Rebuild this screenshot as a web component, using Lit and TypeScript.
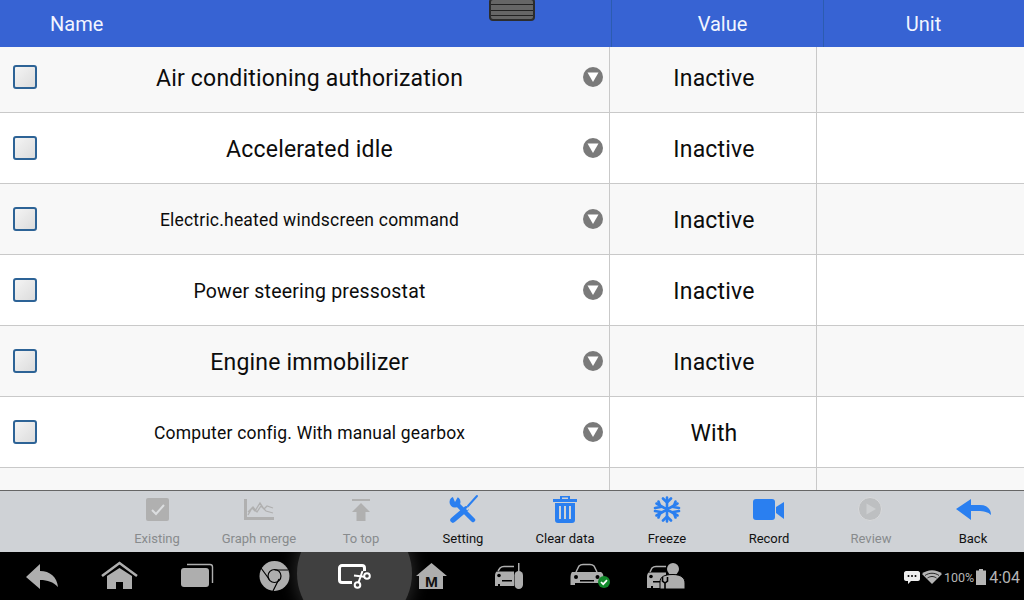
import { LitElement, html, css, svg } from "lit";
import { customElement } from "lit/decorators.js";

const rows: [string, string, string][] = [
  ["Air conditioning authorization", "Inactive", "lg"],
  ["Accelerated idle", "Inactive", "lg"],
  ["Electric.heated windscreen command", "Inactive", "sm"],
  ["Power steering pressostat", "Inactive", "md"],
  ["Engine immobilizer", "Inactive", "lg"],
  ["Computer config. With manual gearbox", "With", "sm"],
];

const B = "#2a7ff0";
const G = "#b0b0b0";
const N = "#aeaeae";
const BAR = "#cfd2d6";

const tools: [string, boolean, unknown][] = [
  ["Existing", false, svg`<rect x="6" y="3" width="23" height="23" rx="2" fill="${G}"/><path d="M12 15l4 4 8-9" fill="none" stroke="#dcdee0" stroke-width="2"/>`],
  ["Graph merge", false, svg`<path d="M2 4h3v18h27v3H2z" fill="${G}"/><path d="M6 20l4-7 3 3 5-8 4 6 3-3 6 2M6 17l5-5 4 5 4-6 5 5 7 2" fill="none" stroke="${G}" stroke-width="1.300"/>`],
  ["To top", false, svg`<path d="M8 4h18v2H8zM17 8l9 9h-4.500v9h-9v-9H8z" fill="${G}"/>`],
  ["Setting", true, svg`<path d="M31 1L22 11" stroke="${B}" stroke-width="2" stroke-linecap="round"/><path d="M20 14L7 25" stroke="${B}" stroke-width="5.500" stroke-linecap="round"/><path d="M10 8L27 25" stroke="${B}" stroke-width="4.500" stroke-linecap="round"/><circle cx="9" cy="7" r="5.500" fill="${B}"/><path d="M9 7L6 0h7z" fill="${BAR}"/><path d="M22 12l1.500 1.500-2 2-1.500-1.500z" fill="${BAR}"/>`],
  ["Clear data", true, svg`<g transform="translate(1,-1)"><path d="M11 5V2h10v3h7v3H4V5zM13 3.500v1.500h6V3.500z" fill="${B}" fill-rule="evenodd"/><path d="M6 9h20v17c0 2-1 3-3 3H9c-2 0-3-1-3-3zM10 12v13h2V12zM15 12v13h2V12zM20 12v13h2V12z" fill="${B}" fill-rule="evenodd"/></g>`],
  ["Freeze", true, svg`<g transform="translate(1,-.5)" stroke="${B}" stroke-width="2.600" fill="none" stroke-linecap="round"><path d="M16 3v24M5.500 9l21 12M26.500 9l-21 12"/><path d="M12 4l4 4 4-4M12 26l4-4 4 4M4 13.500l5.500-1L7.500 7M28 16.500l-5.500 1 2 5.500M7.500 23l2-5.500L4 16.500M24.500 7l-2 5.500 5.500 1"/></g>`],
  ["Record", true, svg`<rect x="1" y="4" width="22" height="21" rx="3" fill="${B}"/><path d="M24 12l8-5v17l-8-6z" fill="${B}"/>`],
  ["Review", false, svg`<circle cx="16" cy="14" r="11.500" fill="#bdbfc1" stroke="#d9dadc" stroke-width="1"/><path d="M12.500 8.500l9.500 5.500-9.500 5.500z" fill="#cdcfd1"/>`],
  ["Back", true, svg`<path d="M0 14L15 4v6h9c7 0 11 4 11 10-3-3-7-4-13-4h-7v9z" fill="${B}"/>`],
];

const navIcons: unknown[] = [
  svg`<path d="M4 17L18 4v7c10 0 17 6 18 16-5-5-10-7-18-7v9z" fill="${N}"/>`,
  svg`<path d="M2 16L19.500 3 37 16" fill="none" stroke="${N}" stroke-width="2.600"/><path d="M7 16L19.500 8 32 16v13h-9v-7h-7v7H7z" fill="${N}"/>`,
  svg`<rect x="3" y="8" width="28" height="19" rx="3" fill="${N}"/><path d="M9 4.500h23c2 0 2.500 1 2.500 2.500v16" fill="none" stroke="${N}" stroke-width="1.400"/>`,
  svg`<circle cx="18.500" cy="16" r="15" fill="${N}"/><circle cx="18.500" cy="16" r="6.500" fill="none" stroke="#000" stroke-width="1.200"/><path d="M18.500 10H32M13 19L5 8M17 31l6-12" stroke="#000" stroke-width="1.200" fill="none"/>`,
  svg`<path d="M18 22.500H8a2.500 2.500 0 0 1-2.500-2.500V8A2.500 2.500 0 0 1 8 5.500h20A2.500 2.500 0 0 1 30.500 8v3" fill="none" stroke="#fff" stroke-width="3"/><circle cx="33" cy="16" r="2.800" fill="none" stroke="#fff" stroke-width="2"/><circle cx="23.500" cy="25" r="2.800" fill="none" stroke="#fff" stroke-width="2"/><path d="M24.500 22.500L28.500 11M30.500 16.800L20 15.500" stroke="#fff" stroke-width="2" fill="none"/>`,
  svg`<path d="M19.500 3L35 16h-4v13H7V16H4z" fill="${N}"/><text x="19.500" y="27" text-anchor="middle" font-family="Liberation Sans, sans-serif" font-weight="700" font-size="15.500" fill="#111">M</text>`,
  svg`<path d="M8 11l2-3c1-1 2-1.500 4-1.500h10" fill="none" stroke="${N}" stroke-width="1.500"/><path d="M7 11.500H24V26H10v-2H8v2H5V16c0-3 1-4.500 2-4.500z" fill="${N}"/><circle cx="9" cy="15.500" r="1.800" fill="#000"/><rect x="12" y="20" width="10" height="1.500" fill="#000"/><rect x="24.500" y="11" width="8.500" height="18" rx="4.200" fill="${N}"/><rect x="28" y="3" width="1.500" height="9" fill="${N}"/>`,
  svg`<path d="M8 12l3-6c1-1 2-1.500 4-1.500h7c2 0 3 .5 4 1.500l3 6" fill="none" stroke="${N}" stroke-width="1.500"/><path d="M4 12H33c2 1 2.500 3 2.500 6v7H31v-2H7v2H2.500v-7c0-3 .5-5 1.500-6z" fill="${N}"/><circle cx="8" cy="17" r="2" fill="#000"/><circle cx="29.500" cy="17" r="2" fill="#000"/><rect x="12" y="20" width="14" height="1.500" fill="#000"/><circle cx="36" cy="22" r="6" fill="#128a2c"/><path d="M33 22l2.200 2.200 3.800-4" fill="none" stroke="#fff" stroke-width="1.700"/>`,
  svg`<path d="M4 12l2-4c1-1 2-1.500 4-1.500h10" fill="none" stroke="${N}" stroke-width="1.500"/><path d="M3 12.500H20V28H7v-2H5v2H1V17c0-3 1-4.500 2-4.500z" fill="${N}"/><circle cx="5" cy="16.500" r="1.800" fill="#000"/><rect x="7" y="21" width="8" height="1.500" fill="#000"/><circle cx="27" cy="9" r="6" fill="${N}"/><path d="M14 29v-7c0-5 4-7.500 13-7.500 8 0 12 3.500 12 8.500v6z" fill="${N}" stroke="#000" stroke-width="1"/><path d="M16.500 17v4l2.500 2 2.500-2v-4M19 23v7" fill="none" stroke="#000" stroke-width="1.600"/>`,
];

@customElement("app-root")
export class AppRoot extends LitElement {
  static styles = css`
    :host { display: block; width: 1024px; height: 600px; overflow: hidden; font-family: Roboto, sans-serif; position: relative; background: #fff; }
    .page { display: flex; flex-direction: column; height: 600px; }
    .head { height: 47px; background: #3763d3; color: #f2f5ff; display: grid; grid-template-columns: 611px 212px 201px; font-size: 20px; flex: none; position: relative; z-index: 1; }
    .head div { display: flex; align-items: center; justify-content: center; padding-top: 1px; padding-right: 1px; border-left: 1px solid #2c5cb0; box-sizing: border-box; }
    .head div:first-child { justify-content: flex-start; padding-left: 50px; border-left: 0; }
    .head div:nth-child(2) { padding-left: 11px; }
    .handle { position: absolute; left: 489px; top: -2px; width: 46px; height: 23px; box-sizing: border-box; background: repeating-linear-gradient(#666 0 4.500px, #222 4.500px 5.500px); border: 2px solid #2c2c2c; border-radius: 4px; z-index: 2; }
    .rows { flex: none; height: 443px; overflow: hidden; }
    .list { margin-top: -5px; }
    .row { display: grid; grid-template-columns: 610px 207px 207px; height: 71px; box-sizing: border-box; border-bottom: 1px solid #c9c9c9; background: #fff; color: #0c0c0c; }
    .row:nth-child(odd) { background: #f8f8f8; }
    .cell { display: flex; align-items: center; justify-content: center; border-right: 1px solid #c9c9c9; position: relative; min-width: 0; }
    .cell:last-child { border-right: 0; }
    .check { position: absolute; left: 13px; top: 50%; margin-top: -12px; width: 24px; height: 24px; box-sizing: border-box; border: 2px solid #2d6396; border-radius: 3px; background: linear-gradient(135deg, #f4f4f4, #dcdcdc); }
    .arrow { position: absolute; left: 583px; top: 50%; margin-top: -10px; width: 20px; height: 20px; border-radius: 50%; background: #7a7a7a; display: flex; align-items: center; justify-content: center; }
    .name { transform: translate(5px, 1px); white-space: nowrap; letter-spacing: .2px; }
    .lg { font-size: 23px; }
    .md { font-size: 19.500px; }
    .sm { font-size: 17.500px; }
    .val { font-size: 23px; letter-spacing: .2px; transform: translate(1px, 1px); }
    .bar { flex: none; height: 62px; background: #cfd2d6; border-top: 1px solid #666; box-sizing: border-box; display: flex; padding-left: 106px; }
    .tool { width: 102px; display: flex; flex-direction: column; align-items: center; font-size: 13px; color: #888b8d; padding-top: 4px; }
    .tool.on { color: #111; }
    .tool svg { width: 34px; height: 32px; display: block; margin-bottom: 4px; overflow: visible; }
    .nav { flex: none; height: 48px; background: #000; display: flex; align-items: center; position: relative; overflow: hidden; padding-left: 3px; }
    .glow { position: absolute; left: 297px; top: -36px; width: 115px; height: 115px; border-radius: 50%; background: #404040; box-shadow: 0 0 16px 3px #262626; }
    .nv { width: 78px; display: flex; justify-content: center; position: relative; flex: none; }
    .nv svg { width: 40px; height: 32px; display: block; overflow: visible; }
    .status { position: absolute; right: 4px; top: 0; bottom: 0; display: flex; align-items: center; gap: 2px; color: #b5b5b5; font-size: 12.500px; padding-top: 2px; }
    .time { font-size: 16px; margin-left: 1px; }
    .status svg { display: block; }
  `;

  render() {
    return html`<div class="page">
      <div class="head"><div>Name</div><div>Value</div><div>Unit</div></div>
      <div class="rows"><div class="list">
        ${rows.map(([n, v, s]) => html`<div class="row">
          <div class="cell"><span class="check"></span><span class="name ${s}">${n}</span>
            <span class="arrow"><svg width="12" height="10" viewBox="0 0 12 10"><path d="M0.500 0.500h11L6 10z" fill="#fff"/></svg></span></div>
          <div class="cell"><span class="val">${v}</span></div>
          <div class="cell"></div>
        </div>`)}
        <div class="row"><div class="cell"></div><div class="cell"></div><div class="cell"></div></div>
      </div></div>
      <div class="bar">
        ${tools.map(([l, on, ic]) => html`<div class="tool ${on ? "on" : ""}"><svg viewBox="0 0 34 32">${ic}</svg>${l}</div>`)}
      </div>
      <div class="nav">
        <div class="glow"></div>
        ${navIcons.map((ic) => html`<div class="nv"><svg viewBox="0 0 40 32">${ic}</svg></div>`)}
        <div class="status">
          <svg width="16" height="13" viewBox="0 0 16 13"><path d="M2 0h12c1 0 2 1 2 2v6c0 1-1 2-2 2H7l-3 3v-3H2c-1 0-2-1-2-2V2c0-1 1-2 2-2z" fill="#eee"/><circle cx="4.500" cy="5" r="1" fill="#000"/><circle cx="8" cy="5" r="1" fill="#000"/><circle cx="11.500" cy="5" r="1" fill="#000"/></svg>
          <svg width="20" height="14" viewBox="0 0 20 14"><path d="M0 4c5-5 15-5 20 0l-10 10z" fill="#b5b5b5"/><path d="M3 5.500c4-3 10-3 14 0M5.500 8c3-2 6-2 9 0" fill="none" stroke="#000" stroke-width=".8"/></svg>
          <span>100%</span>
          <svg width="10" height="16" viewBox="0 0 10 16"><path d="M3 0h4v1.500h3V16H0V1.500h3z" fill="#b5b5b5"/></svg>
          <span class="time">4:04</span>
        </div>
      </div>
      <div class="handle"></div>
    </div>`;
  }
}
